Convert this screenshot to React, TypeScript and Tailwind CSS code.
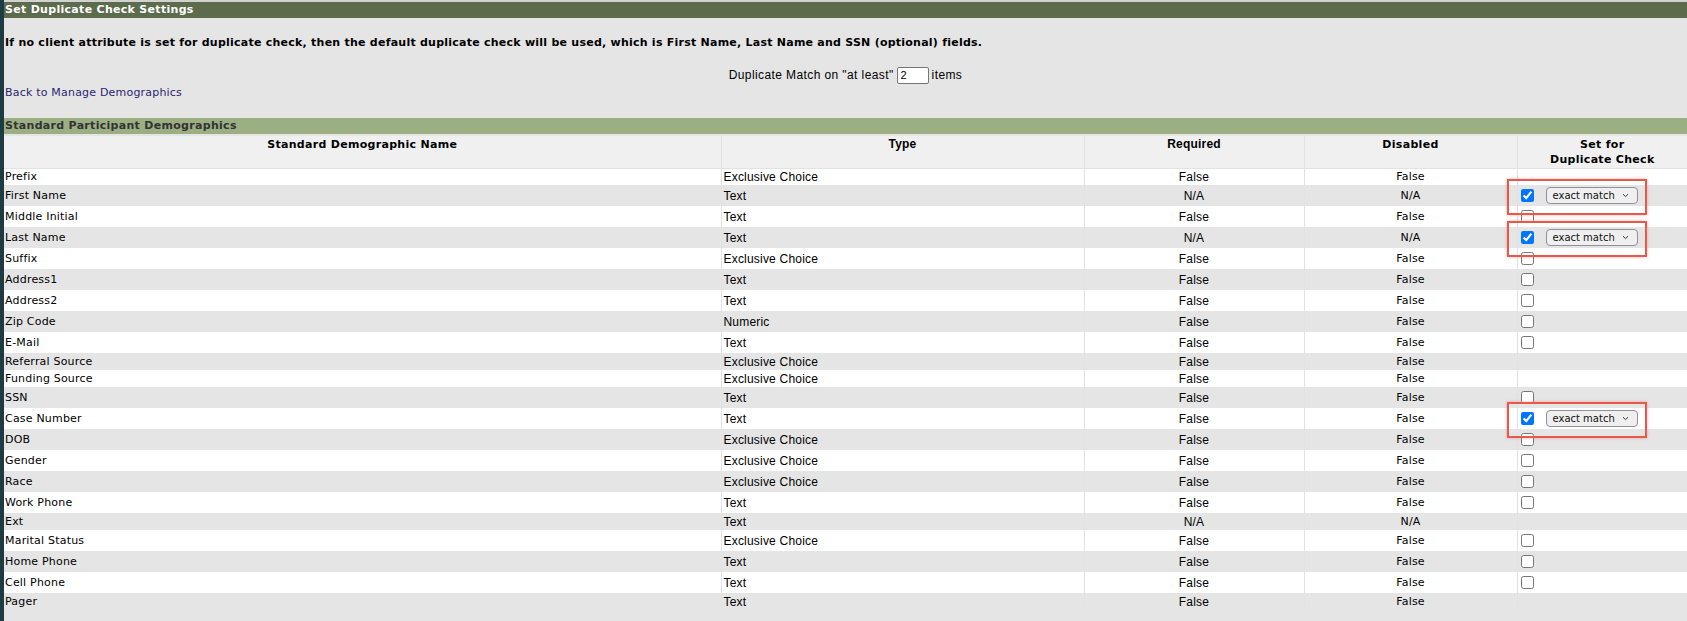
import React from "react";

interface Demographic {
  name: string;
  type: string;
  required: string;
  disabled: string;
  // "none" = no checkbox, "off" = unchecked, "match" = checked with match select
  dup: "none" | "off" | "match";
}

const demographics: Demographic[] = [
  { name: "Prefix", type: "Exclusive Choice", required: "False", disabled: "False", dup: "none" },
  { name: "First Name", type: "Text", required: "N/A", disabled: "N/A", dup: "match" },
  { name: "Middle Initial", type: "Text", required: "False", disabled: "False", dup: "off" },
  { name: "Last Name", type: "Text", required: "N/A", disabled: "N/A", dup: "match" },
  { name: "Suffix", type: "Exclusive Choice", required: "False", disabled: "False", dup: "off" },
  { name: "Address1", type: "Text", required: "False", disabled: "False", dup: "off" },
  { name: "Address2", type: "Text", required: "False", disabled: "False", dup: "off" },
  { name: "Zip Code", type: "Numeric", required: "False", disabled: "False", dup: "off" },
  { name: "E-Mail", type: "Text", required: "False", disabled: "False", dup: "off" },
  { name: "Referral Source", type: "Exclusive Choice", required: "False", disabled: "False", dup: "none" },
  { name: "Funding Source", type: "Exclusive Choice", required: "False", disabled: "False", dup: "none" },
  { name: "SSN", type: "Text", required: "False", disabled: "False", dup: "off" },
  { name: "Case Number", type: "Text", required: "False", disabled: "False", dup: "match" },
  { name: "DOB", type: "Exclusive Choice", required: "False", disabled: "False", dup: "off" },
  { name: "Gender", type: "Exclusive Choice", required: "False", disabled: "False", dup: "off" },
  { name: "Race", type: "Exclusive Choice", required: "False", disabled: "False", dup: "off" },
  { name: "Work Phone", type: "Text", required: "False", disabled: "False", dup: "off" },
  { name: "Ext", type: "Text", required: "N/A", disabled: "N/A", dup: "none" },
  { name: "Marital Status", type: "Exclusive Choice", required: "False", disabled: "False", dup: "off" },
  { name: "Home Phone", type: "Text", required: "False", disabled: "False", dup: "off" },
  { name: "Cell Phone", type: "Text", required: "False", disabled: "False", dup: "off" },
  { name: "Pager", type: "Text", required: "False", disabled: "False", dup: "none" },
];

function MatchSelect() {
  return (
    <div className="ml-[12px] flex h-[17px] w-[92px] items-center justify-between rounded-[4px] border border-[#8f8f9d] bg-[#efeff0] pl-[6px] pr-[8px] text-[10px] leading-none tracking-normal text-[#111]">
      <span>exact match</span>
      <svg width="7" height="5" viewBox="0 0 7 5" fill="none">
        <path d="M1 1.2 L3.5 3.6 L6 1.2" stroke="#333" strokeWidth="1" />
      </svg>
    </div>
  );
}

function DupCell({ dup }: { dup: Demographic["dup"] }) {
  if (dup === "none") return null;
  return (
    <div className="relative flex h-full items-center pl-[3px]">
      <input type="checkbox" defaultChecked={dup === "match"} className="m-0 h-[13px] w-[13px]" />
      {dup === "match" && (
        <>
          <MatchSelect />
          {/* highlight frame around the active match rule */}
          <div className="pointer-events-none absolute -left-[11px] -top-[6px] z-10 h-[36px] w-[140px] border-2 border-[#e9594b] shadow-[0_0_3px_rgba(233,89,75,0.45)]" />
        </>
      )}
    </div>
  );
}

export default function App() {
  // Tahoma-like columns
  const narrow = "font-['Liberation_Sans',Tahoma,sans-serif] text-[12px] tracking-[0.2px]";

  return (
    <div className="flex min-h-[621px] bg-[#e5e5e5] font-['DejaVu_Sans',Verdana,sans-serif] text-[11px] tracking-[0.2px] text-black">
      <div className="w-[4px] shrink-0 bg-[#1e3b45]" />

      <div className="flex-1 border-t-2 border-[#d2d2d2]">
        <div className="h-[16px] bg-[#5b6b4b] pl-[1px] font-bold leading-[16px] tracking-[0.3px] text-white">
          Set Duplicate Check Settings
        </div>

        <p className="mt-[18px] pl-[1px] font-bold leading-[14px] tracking-[0.24px]">
          If no client attribute is set for duplicate check, then the default duplicate check will be used, which is
          First Name, Last Name and SSN (optional) fields.
        </p>

        <div className="mt-[16px] flex h-[18px] items-center justify-center font-['Liberation_Sans',Tahoma,sans-serif] text-[12px] tracking-[0.4px]">
          <span>Duplicate Match on "at least"</span>
          <input
            type="text"
            defaultValue="2"
            className="mx-[3px] h-[17px] w-[32px] rounded-[2px] border border-[#767676] bg-white px-[3px] text-[11px] outline-none"
          />
          <span>items</span>
        </div>

        <a href="#" className="mt-[2px] block pl-[1px] leading-[14px] text-[#2b2570]">
          Back to Manage Demographics
        </a>

        <div className="mt-[18px] h-[16px] bg-[#9caf82] pl-[1px] font-bold leading-[16px] tracking-[0.3px] text-[#333]">
          Standard Participant Demographics
        </div>

        <table className="mt-[2px] w-full table-fixed">
          <colgroup>
            <col className="w-[717px]" />
            <col className="w-[363px]" />
            <col className="w-[220px]" />
            <col className="w-[213px]" />
            <col className="w-[170px]" />
          </colgroup>
          <thead>
            <tr className="h-[32px] bg-[#f0f0f0] align-top font-bold leading-[15px] tracking-[0.3px]">
              <th className="border-b border-[#e2e2e2] pt-[1px] text-center">Standard Demographic Name</th>
              <th className={`border-b border-l border-[#e2e2e2] pt-[1px] text-center ${narrow}`}>Type</th>
              <th className={`border-b border-l border-[#e2e2e2] pt-[1px] text-center ${narrow}`}>Required</th>
              <th className="border-b border-l border-[#e2e2e2] pt-[1px] text-center">Disabled</th>
              <th className="border-b border-l border-[#e2e2e2] pt-[1px] text-center">
                Set for
                <br />
                Duplicate Check
              </th>
            </tr>
          </thead>
          <tbody>
            {demographics.map((d, i) => (
              <tr
                key={d.name}
                className={`${i % 2 === 0 ? "bg-white" : "bg-[#e5e5e5]"} ${d.dup === "none" ? "h-[17px]" : "h-[21px]"} leading-[14px]`}
              >
                <td className="p-0 pl-[1px]">{d.name}</td>
                <td className={`border-l border-[#e2e2e2] p-0 pl-[2px] ${narrow}`}>{d.type}</td>
                <td className={`border-l border-[#e2e2e2] p-0 text-center ${narrow}`}>{d.required}</td>
                <td className="border-l border-[#e2e2e2] p-0 text-center">{d.disabled}</td>
                <td className="h-px border-l border-[#e2e2e2] p-0">
                  <DupCell dup={d.dup} />
                </td>
              </tr>
            ))}
          </tbody>
        </table>
      </div>
    </div>
  );
}
